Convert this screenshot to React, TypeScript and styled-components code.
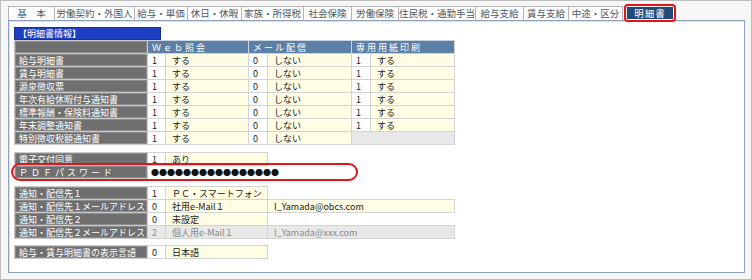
import React from "react"
import styled, { createGlobalStyle } from "styled-components"

const GlobalStyle = createGlobalStyle`
  html, body { margin: 0; padding: 0; }
  body {
    width: 752px;
    height: 280px;
    overflow: hidden;
    font-family: "Noto Sans CJK JP", "Noto Sans", sans-serif;
  }
`

type Row = {
  label: string
  web?: [string, string]
  mail?: [string, string]
  paper?: [string, string]
}

const meisai: Row[] = [
  { label: "給与明細書", web: ["1", "する"], mail: ["0", "しない"], paper: ["1", "する"] },
  { label: "賃与明細書", web: ["1", "する"], mail: ["0", "しない"], paper: ["1", "する"] },
  { label: "源泉徴収票", web: ["1", "する"], mail: ["0", "しない"], paper: ["1", "する"] },
  { label: "年次有給休暇付与通知書", web: ["1", "する"], mail: ["0", "しない"], paper: ["1", "する"] },
  { label: "標準報酬・保険料通知書", web: ["1", "する"], mail: ["0", "しない"], paper: ["1", "する"] },
  { label: "年末調整通知書", web: ["1", "する"], mail: ["0", "しない"], paper: ["1", "する"] },
  { label: "特別徴収税額通知書", web: ["1", "する"], mail: ["0", "しない"] },
]

const tabs = [
  { name: "基　本", w: 47 },
  { name: "労働契約・外国人", w: 81 },
  { name: "給与・単価", w: 54 },
  { name: "休日・休暇", w: 55 },
  { name: "家族・所得税", w: 63 },
  { name: "社会保険", w: 49 },
  { name: "労働保険", w: 48 },
  { name: "住民税・通勤手当", w: 78 },
  { name: "給与支給", w: 49 },
  { name: "賃与支給", w: 46 },
  { name: "中途・区分", w: 55 },
]

export default function App() {
  return (
    <>
      <GlobalStyle />
      <Frame>
        <TabBar>
          {tabs.map((t) => (
            <Tab key={t.name} $w={t.w}>{t.name}</Tab>
          ))}
          <ActiveWrap>
            <ActiveTab>明細書</ActiveTab>
          </ActiveWrap>
        </TabBar>
        <Panel>
          <Title>【明細書情報】</Title>
          <Grid>
            <Cols />
            <tbody>
              <tr>
                <Label />
                <Head colSpan={2}>Ｗｅｂ照会</Head>
                <Head colSpan={2}>メール配信</Head>
                <Head colSpan={2}>専用用紙印刷</Head>
              </tr>
              {meisai.map((r) => (
                <tr key={r.label}>
                  <Label>{r.label}</Label>
                  {[r.web, r.mail, r.paper].map((v, i) =>
                    v ? (
                      <React.Fragment key={i}>
                        <Code>{v[0]}</Code>
                        <Value>{v[1]}</Value>
                      </React.Fragment>
                    ) : (
                      <Empty key={i} colSpan={2} />
                    )
                  )}
                </tr>
              ))}
            </tbody>
          </Grid>

          <Section $gap={7}>
            <Grid>
              <Cols />
              <tbody>
                <tr>
                  <Label>電子交付同意</Label>
                  <Code>1</Code>
                  <Value colSpan={2}>あり</Value>
                  <Blank colSpan={3} />
                </tr>
                <tr>
                  <Label $spaced>ＰＤＦパスワード</Label>
                  <Dots colSpan={6}>●●●●●●●●●●●●●●●●</Dots>
                </tr>
              </tbody>
            </Grid>
            <Highlight />
          </Section>

          <Section $gap={7}>
            <Grid>
              <Cols />
              <tbody>
                <tr>
                  <Label>通知・配信先１</Label>
                  <Code>1</Code>
                  <Value colSpan={2}>ＰＣ・スマートフォン</Value>
                  <Blank colSpan={3} />
                </tr>
                <tr>
                  <Label>通知・配信先１メールアドレス</Label>
                  <Code>0</Code>
                  <Value colSpan={2}>社用e-Mail１</Value>
                  <Value colSpan={3}>I_Yamada@obcs.com</Value>
                </tr>
                <tr>
                  <Label>通知・配信先２</Label>
                  <Code>0</Code>
                  <Value colSpan={2}>未設定</Value>
                  <Blank colSpan={3} />
                </tr>
                <tr>
                  <Label>通知・配信先２メールアドレス</Label>
                  <Code $off>2</Code>
                  <Value $off colSpan={2}>個人用e-Mail１</Value>
                  <Value $off colSpan={3}>I_Yamada@xxx.com</Value>
                </tr>
              </tbody>
            </Grid>
          </Section>

          <Section $gap={6}>
            <Grid>
              <Cols />
              <tbody>
                <tr>
                  <Label>給与・賃与明細書の表示言語</Label>
                  <Code>0</Code>
                  <Value colSpan={2}>日本語</Value>
                  <Blank colSpan={3} />
                </tr>
              </tbody>
            </Grid>
          </Section>
        </Panel>
      </Frame>
    </>
  )
}

function Cols() {
  return (
    <colgroup>
      {[133, 18, 83, 19, 84, 19, 84].map((w, i) => (
        <col key={i} style={{ width: w }} />
      ))}
    </colgroup>
  )
}

const Frame = styled.div`
  box-sizing: border-box;
  width: 752px;
  height: 280px;
  border: 1px solid #bdbdbd;
  background: #f6f6f6;
  padding: 3px 6px 0 7px;
`

const TabBar = styled.div`
  display: flex;
  align-items: flex-end;
  height: 16px;
`

const Tab = styled.div<{ $w: number }>`
  box-sizing: border-box;
  width: ${(p) => p.$w}px;
  height: 14px;
  margin-right: -1px;
  border: 1px solid #b4b4b4;
  border-bottom: none;
  background: #fff;
  color: #4a5866;
  font-size: 9.5px;
  line-height: 13px;
  text-align: center;
  white-space: nowrap;
`

const ActiveWrap = styled.div`
  box-sizing: border-box;
  margin-left: 2px;
  height: 18px;
  padding: 1px;
  border: 2px solid #e8121b;
  border-radius: 4px;
  margin-bottom: -2px;
`

const ActiveTab = styled.div`
  width: 46px;
  height: 12px;
  background: #1f4a78;
  color: #fff;
  font-size: 9.5px;
  line-height: 12px;
  text-align: center;
  letter-spacing: 1px;
`

const Panel = styled.div`
  box-sizing: border-box;
  width: 737px;
  height: 253px;
  border: 1px solid #8da2bd;
  box-shadow: inset 1px 1px 0 #d9e1ea;
  background: #fff;
  padding: 6px 5px 0 5px;
`

const Title = styled.div`
  box-sizing: border-box;
  width: 147px;
  height: 13px;
  background: #1d3fc4;
  border: 1px solid #16309a;
  color: #fff;
  font-size: 9px;
  line-height: 11px;
  padding-left: 3px;
`

const Section = styled.div<{ $gap: number }>`
  position: relative;
  margin-top: ${(p) => p.$gap}px;
`

const Grid = styled.table`
  table-layout: fixed;
  width: 440px;
  border-collapse: collapse;
  font-size: 9px;

  td {
    box-sizing: border-box;
    height: 13px;
    padding: 0 0 0 4px;
    line-height: 11px;
    white-space: nowrap;
    overflow: hidden;
  }
`

const Label = styled.td<{ $spaced?: boolean }>`
  background: #6f6f6f;
  color: #fff;
  border: 1px solid #c9c9c9;
  box-shadow: inset 0 0 0 1px #8c8c8c;
  letter-spacing: ${(p) => (p.$spaced ? "3px" : "0")};
`

const Head = styled.td`
  background: #5c7fa6;
  color: #fff;
  border: 1px solid #c9d3de;
  letter-spacing: 2px;
`

const Code = styled.td<{ $off?: boolean }>`
  background: ${(p) => (p.$off ? "#e8e8e8" : "#fff")};
  color: ${(p) => (p.$off ? "#8a8a8a" : "#222")};
  border: 1px solid #d4d4d4;
`

const Value = styled.td<{ $off?: boolean }>`
  background: ${(p) => (p.$off ? "#e8e8e8" : "#fffde4")};
  color: ${(p) => (p.$off ? "#8a8a8a" : "#222")};
  border: 1px solid #d4d4d4;
  padding-left: 6px !important;
`

const Empty = styled.td`
  background: #e8e8e8;
  border: 1px solid #d4d4d4;
`

const Blank = styled.td`
  background: transparent;
  border: none;
`

const Dots = styled.td`
  background: #fff;
  color: #111;
  font-size: 8px;
  padding-left: 3px !important;
`

const Highlight = styled.div`
  position: absolute;
  left: -3px;
  top: 11px;
  width: 347px;
  height: 18px;
  box-sizing: border-box;
  border: 2.5px solid #e5141c;
  border-radius: 9px;
  pointer-events: none;
`
